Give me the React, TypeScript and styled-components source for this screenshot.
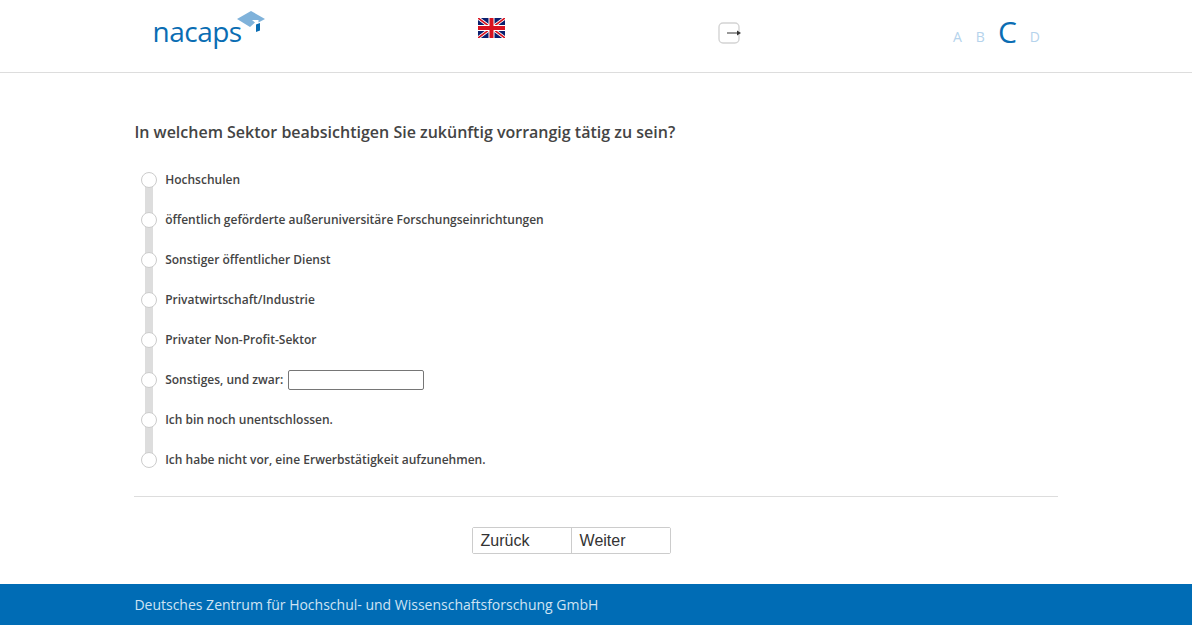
import styled, { createGlobalStyle } from 'styled-components';

const options = [
    'Hochschulen',
    'öffentlich geförderte außeruniversitäre Forschungseinrichtungen',
    'Sonstiger öffentlicher Dienst',
    'Privatwirtschaft/Industrie',
    'Privater Non-Profit-Sektor',
    'Sonstiges, und zwar:',
    'Ich bin noch unentschlossen.',
    'Ich habe nicht vor, eine Erwerbstätigkeit aufzunehmen.',
];

const levels = ['A', 'B', 'C', 'D'];

const App = () => {
    return (
        <Page>
            <GlobalStyle />
            <Header>
                <LogoCell>
                    <LogoText>nacaps</LogoText>
                    <LogoCap width='30' height='24' viewBox='0 0 30 24'>
                        <path d='M1 9 L15 1 L29 9 L22.5 12.5 L22.5 10 L16 10 L19 12.5 L14 17 Z' fill='#7fb2da' />
                        <path d='M20 14.5 L24 13 L24 20.5 L20 22 Z' fill='#0a6db3' />
                    </LogoCap>
                </LogoCell>
                <FlagCell>
                    <svg width='27' height='20' viewBox='0 0 27 20'>
                        <rect width='27' height='20' fill='#0a1f6e' />
                        <path d='M0 0 L27 20 M27 0 L0 20' stroke='#fff' strokeWidth='3.4' />
                        <path d='M0 0 L27 20 M27 0 L0 20' stroke='#d8121f' strokeWidth='1.6' />
                        <path d='M13.5 0 V20 M0 10 H27' stroke='#fff' strokeWidth='6' />
                        <path d='M13.5 0 V20 M0 10 H27' stroke='#d8121f' strokeWidth='4' />
                    </svg>
                </FlagCell>
                <LogoutCell>
                    <svg width='25' height='22' viewBox='0 0 25 22'>
                        <rect x='1' y='1' width='20' height='20' rx='4' fill='#fff' stroke='#d4d4d4' strokeWidth='1.4' />
                        <path d='M9 11 H20' stroke='#555' strokeWidth='1.2' />
                        <path d='M19 8.5 L23 11 L19 13.5 Z' fill='#333' />
                    </svg>
                </LogoutCell>
                <Levels>
                    {levels.map((level) => (
                        <Level key={level} $active={level === 'C'}>
                            {level}
                        </Level>
                    ))}
                </Levels>
            </Header>
            <Main>
                <Question>In welchem Sektor beabsichtigen Sie zukünftig vorrangig tätig zu sein?</Question>
                <OptionList>
                    {options.map((option, index) => (
                        <Option key={option} $last={index === options.length - 1}>
                            <Radio />
                            <OptionLabel>{option}</OptionLabel>
                            {option.startsWith('Sonstiges') && <TextField type='text' />}
                        </Option>
                    ))}
                </OptionList>
                <Divider />
                <ButtonRow>
                    <NavButton type='button'>Zurück</NavButton>
                    <NavButton type='button'>Weiter</NavButton>
                </ButtonRow>
            </Main>
            <Footer>Deutsches Zentrum für Hochschul- und Wissenschaftsforschung GmbH</Footer>
        </Page>
    );
};

export default App;

const GlobalStyle = createGlobalStyle`
    html, body {
        margin: 0;
        padding: 0;
        background: #fff;
    }
    * {
        box-sizing: border-box;
    }
`;

const Page = styled.div`
    width: 1192px;
    font-family: 'Open Sans', sans-serif;
    color: #444;
`;

const Header = styled.header`
    display: flex;
    height: 73px;
    border-bottom: 1px solid #ddd;
`;

const LogoCell = styled.div`
    position: relative;
    width: 478px;
    padding: 12px 0 0 152.5px;
`;

const LogoText = styled.span`
    font-size: 28px;
    line-height: 38px;
    letter-spacing: -0.5px;
    color: #0a6db3;
`;

const LogoCap = styled.svg`
    position: absolute;
    left: 236px;
    top: 10px;
`;

const FlagCell = styled.div`
    width: 240px;
    padding-top: 18px;
`;

const LogoutCell = styled.div`
    width: 235px;
    padding-top: 22px;
`;

const Levels = styled.div`
    display: flex;
    align-items: flex-start;
    gap: 14px;
    height: 46px;
    padding-top: 12px;
`;

const Level = styled.span<{ $active?: boolean }>`
    margin: ${({ $active }) => ($active ? '0 -1px' : '5px 0 0')};
    font-size: ${({ $active }) => ($active ? '30px' : '14px')};
    line-height: 40px;
    color: ${({ $active }) => ($active ? '#0a6db3' : '#b5d3ec')};
`;

const Main = styled.main`
    display: flex;
    flex-direction: column;
    height: 511px;
    padding: 0 134.4px;
`;

const Question = styled.h1`
    margin: 47px 0 0;
    font-size: 16px;
    line-height: 24px;
    font-weight: 600;
    color: #444;
`;

const OptionList = styled.div`
    display: flex;
    flex-direction: column;
    margin-top: 16px;
`;

const Option = styled.div<{ $last?: boolean }>`
    position: relative;
    display: flex;
    align-items: center;
    height: 40px;
    padding-left: 30.8px;

    &::before {
        content: '';
        display: ${({ $last }) => ($last ? 'none' : 'block')};
        position: absolute;
        left: 10.6px;
        top: 20px;
        width: 8px;
        height: 40px;
        background: #ddd;
    }
`;

const Radio = styled.span`
    position: absolute;
    left: 6.6px;
    top: 12px;
    width: 16px;
    height: 16px;
    border-radius: 50%;
    border: 1px solid #ccc;
    background: #fff;
`;

const OptionLabel = styled.span`
    padding-bottom: 2px;
    font-size: 12px;
    font-weight: 600;
    color: #444;
`;

const TextField = styled.input`
    width: 136px;
    height: 20px;
    margin-left: 4.6px;
    padding: 1px 2px;
    background: #fff;
    border: 1px solid #767676;
    border-radius: 2px;
`;

const Divider = styled.hr`
    width: 100%;
    margin: 16px 0 0;
    border: 0;
    border-top: 1px solid #ddd;
`;

const ButtonRow = styled.div`
    display: flex;
    width: 199px;
    align-self: flex-start;
    margin-top: 30px;
    margin-left: 337.6px;
    border: 1px solid #ccc;
    border-radius: 2px;
`;

const NavButton = styled.button`
    flex: 1;
    height: 25px;
    padding: 0 0 0 7.6px;
    background: #fff;
    border: 0;
    text-align: left;
    font-family: 'Liberation Sans', Arial, sans-serif;
    font-size: 16px;
    color: #333;

    & + & {
        border-left: 1px solid #ccc;
    }
`;

const Footer = styled.footer`
    height: 41px;
    padding-left: 134.4px;
    background: #006cb5;
    color: #cfe3f3;
    font-size: 14px;
    line-height: 41px;
`;
